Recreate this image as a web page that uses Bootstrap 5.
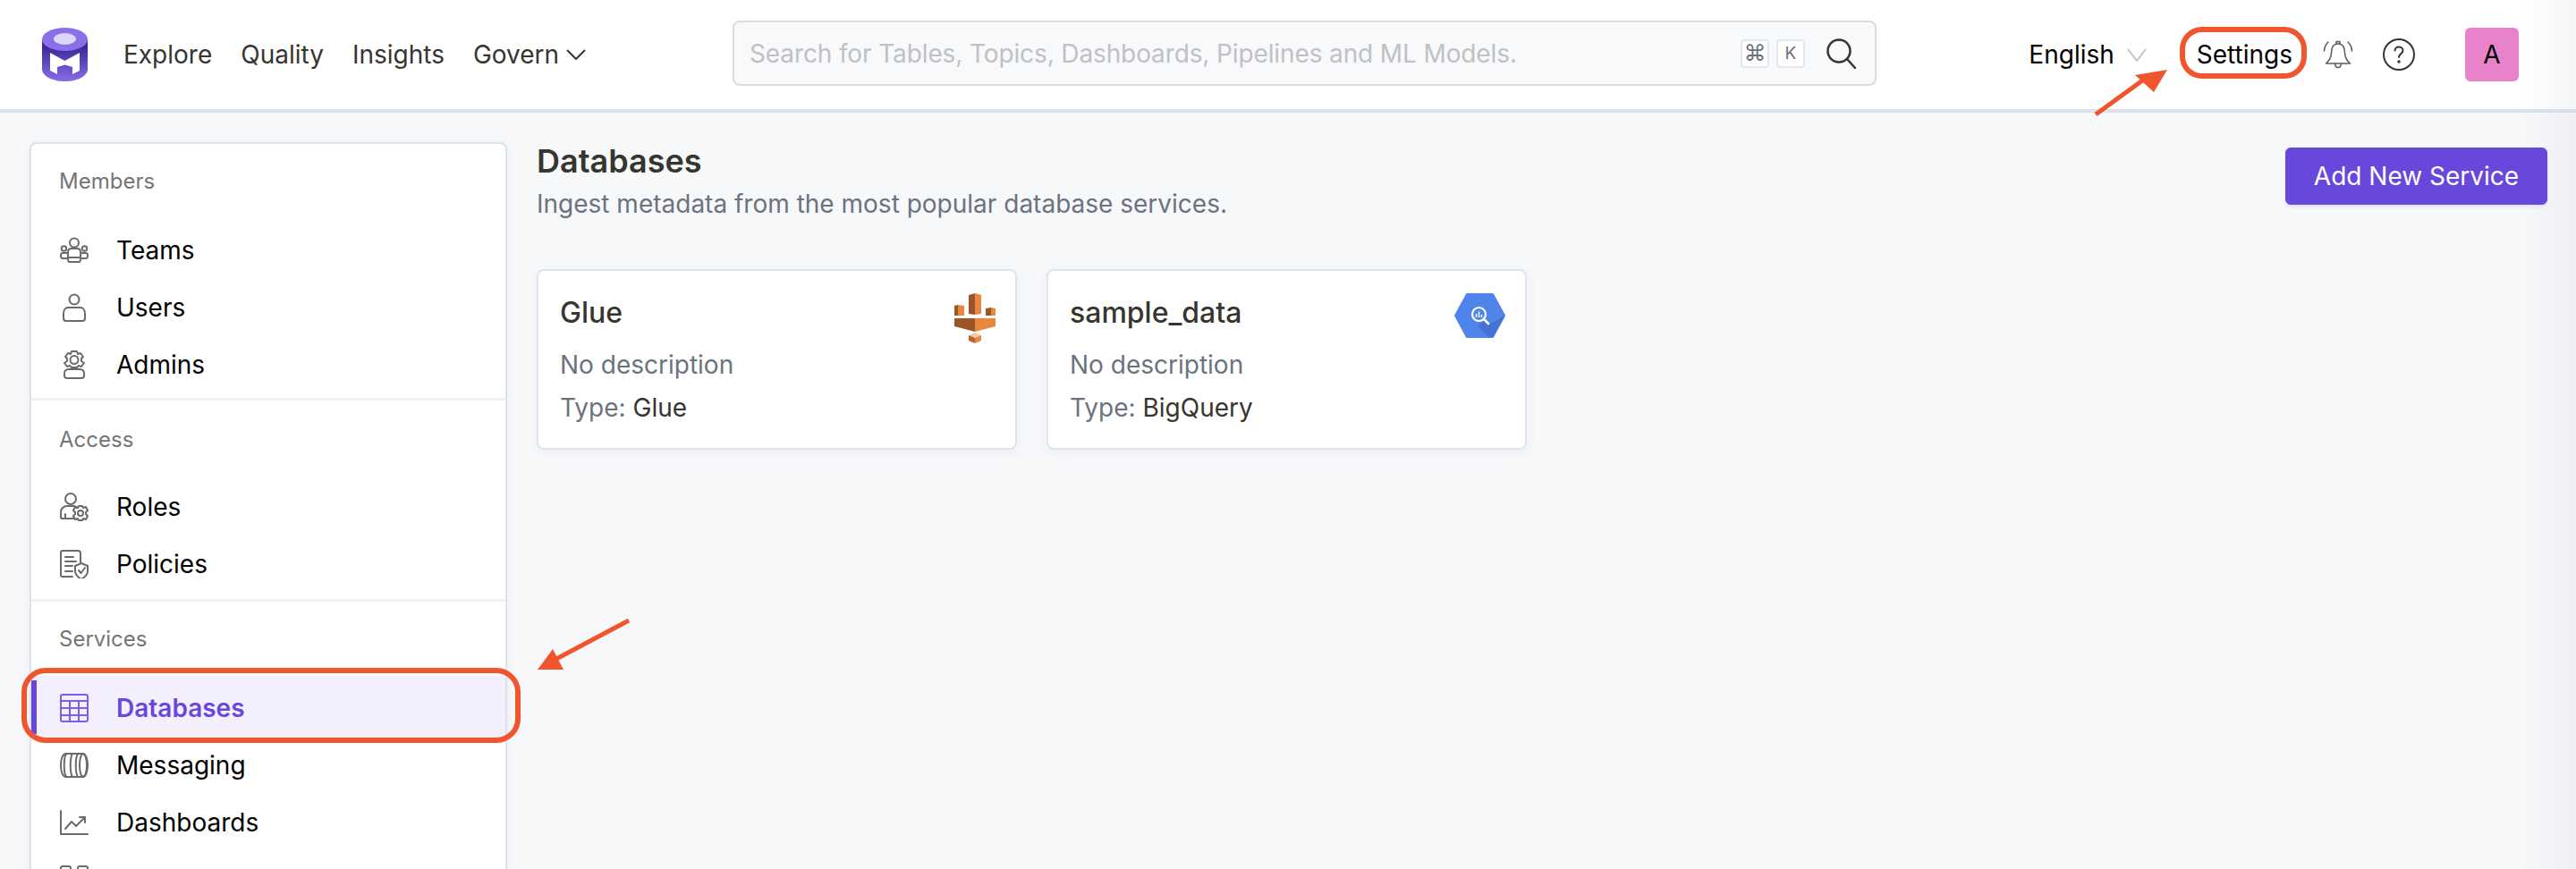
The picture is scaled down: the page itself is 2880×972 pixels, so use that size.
<!DOCTYPE html>
<html lang="en">
<head>
<meta charset="utf-8">
<title>Databases</title>
<link href="https://cdn.jsdelivr.net/npm/bootstrap@5.3.0/dist/css/bootstrap.min.css" rel="stylesheet">
<style>
html,body{height:100%;}
body{width:2880px;height:972px;overflow:hidden;position:relative;background:#f7f8fa;font-family:Inter,"Noto Sans",sans-serif;font-size:28px;color:#37352f;}
.top-bar{height:126px;background:#fff;border-bottom:4px solid #dde3ea;padding:0 64px 0 47px;flex-wrap:nowrap;}
.top-bar .nav-link{color:#37352f;padding:0;font-size:28px;line-height:40px;}
.top-nav{margin-left:40px;gap:32px;}
.search-box{position:absolute;left:819px;top:23px;width:1279px;height:73px;border:2px solid #dcdcdc;border-radius:8px;background:#f8f9fb;padding:0 21px 0 17px;}
.search-input{border:0;background:transparent;font-size:28px;letter-spacing:-.12px;padding:0;flex:1;color:#37352f;outline:none;font-family:inherit;}
.search-input::placeholder{color:#bfc1c5;opacity:1;}
.key-cap{width:32px;height:32px;border:2px solid #e2e7ee;border-radius:4px;background:#fff;color:#6b7280;font-size:19px;line-height:1;}
.key-glyph{font-size:25px;}
.right-tools{margin-left:auto;}
.lang-name{color:#000;margin-right:14px;}
.set-name{color:#000;margin-left:56px;margin-right:34px;}
.help-gap{margin-left:33px;}
.ava-box{width:60px;height:60px;background:#e882cb;color:#000;border-radius:6px;margin-left:56px;}
.side-panel{width:534px;margin:33px 0 0 33px;background:#fff;border:2px solid #dde3ea;border-bottom:0;border-radius:8px 8px 0 0;box-shadow:0 2px 8px rgba(30,50,90,.06);height:813px;overflow:hidden;flex:none;}
.side-group{border-bottom:3px solid #eff1f4;padding:25px 0 7px;}
.side-group:first-child{padding-bottom:5px;}
.side-group:nth-child(2){padding-top:27px;}
.side-group:nth-child(2) .side-title{margin-bottom:26px;}
.side-group:last-child{border-bottom:0;}
.side-title{font-size:24px;line-height:34px;color:#757575;margin:0 0 28px 31px;}
.side-item{height:64px;padding-left:32px;gap:31px;color:#000;position:relative;font-size:28px;flex-wrap:nowrap;}
.side-item svg{flex:none;width:32px;height:32px;fill:none;stroke:#6b6b6b;stroke-width:2;stroke-linecap:round;stroke-linejoin:round;}
.side-item.is-on{background:#f3effd;color:#6847dd;font-weight:600;height:72px;margin:-4px 0;}
.side-item.is-on::before{content:"";position:absolute;left:0;top:5px;bottom:7px;width:6px;background:#6847dd;}
.side-item.is-on svg{stroke:#7b5ee6;}
.page-main{margin:0 0 0 33px;flex:1;padding-right:32px;min-width:0;}
.page-head{height:175px;padding-top:31px;}
.page-name{font-size:36px;font-weight:600;line-height:46px;margin:0 0 2px;color:#37352f;}
.page-sub{font-size:28px;line-height:46px;color:#6b7280;margin:0;}
.add-btn{--bs-btn-bg:#6847dd;--bs-btn-border-color:#6847dd;--bs-btn-hover-bg:#6847dd;--bs-btn-hover-border-color:#6847dd;font-size:28px;height:64px;width:293px;border-radius:6px;margin-top:8px;padding:0;box-shadow:0 3px 3px rgba(30,50,90,.08);}
.svc-list{gap:33px;}
.svc-card{width:537px;height:202px;border:2px solid #dfe4ec;border-radius:8px;box-shadow:0 4px 14px rgba(30,50,90,.05);padding:25px 22px 0 24px;}
.svc-title{font-size:32px;line-height:44px;font-weight:500;margin:0 0 16px;color:#37352f;}
.svc-line{font-size:28px;line-height:40px;color:#6b7280;margin:0 0 8px;}
.svc-line span{color:#37352f;}
.mark-layer{position:absolute;left:0;top:0;width:2880px;height:972px;pointer-events:none;}
.edge-fade{position:absolute;top:0;right:0;width:60px;height:972px;background:linear-gradient(to right,rgba(120,125,135,0),rgba(120,125,135,.07));pointer-events:none;}
</style>
</head>
<body>
<nav class="navbar top-bar d-flex align-items-center">
  <svg width="51" height="60" viewBox="0 0 51 60" aria-label="logo">
    <defs><linearGradient id="cylg" x1="0" y1="0" x2="0" y2="1"><stop offset="0.2" stop-color="#3c2a9c"/><stop offset="1" stop-color="#8a6de8"/></linearGradient></defs>
    <path d="M0 13V46C0 54 11 60 25.500 60S51 54 51 46V13Z" fill="url(#cylg)"/>
    <ellipse cx="25.500" cy="13" rx="25.500" ry="13" fill="#8b6fe8"/>
    <ellipse cx="25.500" cy="12.500" rx="12.500" ry="6.500" fill="#ddd6f6"/>
    <path d="M9 28 25.500 37 42 28V48L34 52V44L25.500 41.500 17 44V52L9 48Z" fill="#fff"/>
  </svg>
  <ul class="nav top-nav align-items-center">
    <li class="nav-item"><a class="nav-link" href="#">Explore</a></li>
    <li class="nav-item"><a class="nav-link" href="#">Quality</a></li>
    <li class="nav-item"><a class="nav-link" href="#">Insights</a></li>
    <li class="nav-item d-flex align-items-center gap-2"><a class="nav-link" href="#">Govern</a>
      <svg width="22" height="12" viewBox="0 0 22 12" fill="none" stroke="#37352f" stroke-width="2"><path d="M1 1 11 11 21 1"/></svg></li>
  </ul>
  <div class="search-box d-flex align-items-center">
    <input class="search-input" type="text" placeholder="Search for Tables, Topics, Dashboards, Pipelines and ML Models.">
    <span class="key-cap key-glyph d-flex align-items-center justify-content-center">⌘</span>
    <span class="key-cap d-flex align-items-center justify-content-center ms-2">K</span>
    <svg class="ms-4" width="33" height="34" viewBox="0 0 33 34" fill="none" stroke="#37352f" stroke-width="2.500" stroke-linecap="round"><circle cx="14" cy="14" r="12.500"/><path d="M23 23 32 33"/></svg>
  </div>
  <div class="right-tools d-flex align-items-center">
    <span class="lang-name">English</span>
    <svg width="22" height="15" viewBox="0 0 22 15" fill="none" stroke="#c4c4c4" stroke-width="2"><path d="M1 1 11 14 21 1"/></svg>
    <span class="set-name">Settings</span>
    <svg width="34" height="34" viewBox="0 0 34 34" fill="none" stroke="#5e5e5e" stroke-width="1.600" stroke-linecap="round" stroke-linejoin="round"><path d="M17 5C11 5 9.500 10 9.500 15 9.500 21 7 24 3.500 27H30.500C27 24 24.500 21 24.500 15 24.500 10 23 5 17 5ZM15 2.500H19V5H15ZM13.500 27C14 33 20 33 20.500 27M6 3C3 6 1.500 9 1.500 13M28 3C31 6 32.500 9 32.500 13"/></svg>
    <svg class="help-gap" width="36" height="36" viewBox="0 0 36 36" fill="none" stroke="#37352f" stroke-width="2" stroke-linecap="round"><circle cx="18" cy="18" r="17"/><path d="M13.500 13.500C13.500 8 22.500 8 22.500 13.500 22.500 17 18 17 18 21"/><circle cx="18" cy="26" r="0.800"/></svg>
    <span class="ava-box d-flex align-items-center justify-content-center">A</span>
  </div>
</nav>
<div class="d-flex">
  <aside class="side-panel">
    <div class="side-group">
      <p class="side-title">Members</p>
      <div class="side-item d-flex align-items-center"><svg viewBox="0 0 32 32"><circle cx="16" cy="7.500" r="5"/><path d="M9 24V18C9 15 11 14 13 14H19C21 14 23 15 23 18V24M9 26C9 28 10 29 11 29H21C22 29 23 28 23 26V24H9Z"/><circle cx="4.500" cy="14" r="2.800"/><circle cx="27.500" cy="14" r="2.800"/><path d="M9 19H3C1.500 19 1 20 1 22 1 24 2 25 3 25H9M23 19H29C30.500 19 31 20 31 22 31 24 30 25 29 25H23"/></svg><span>Teams</span></div>
      <div class="side-item d-flex align-items-center"><svg viewBox="0 0 32 32"><circle cx="16" cy="7" r="5.500"/><path d="M9 16H23C26 16 28 19 28 23V28C28 30 27 31 25 31H7C5 31 4 30 4 28V23C4 19 6 16 9 16Z"/></svg><span>Users</span></div>
      <div class="side-item d-flex align-items-center"><svg viewBox="0 0 32 32"><path d="M13 1H19L20 4 23 3 26 7 24 9V12L27 14 24 18 21 17 19 19H13L11 17 8 18 5 14 8 12V9L6 7 9 3 12 4Z"/><circle cx="16" cy="10.500" r="4.500"/><path d="M10 21H22C25 21 27 23 27 26V28C27 30 26 31 24 31H8C6 31 5 30 5 28V26C5 23 7 21 10 21Z"/></svg><span>Admins</span></div>
    </div>
    <div class="side-group">
      <p class="side-title">Access</p>
      <div class="side-item d-flex align-items-center"><svg viewBox="0 0 32 32" stroke-width="1.800"><circle cx="12" cy="7" r="6"/><path d="M15 29H2C1 29 1 28 1 27V22C1 18 4 15 8 15H16C17 15 18 16 19 17M6 24V29"/><circle cx="23" cy="23" r="3"/><path d="M21 15H25L26 17 29 16 31 20 29 22V24L31 26 29 30 26 29 25 31H21L20 29 17 30 15 26 17 24V22L15 20 17 16 20 17Z"/></svg><span>Roles</span></div>
      <div class="side-item d-flex align-items-center"><svg viewBox="0 0 32 32" stroke-width="1.800"><path d="M14 30H3C1.500 30 1 29 1 28V3C1 2 2 1 3 1H20C22 1 23 2 23 4V14M6 8H15M6 13H18M6 18H14M6 24H14"/><path d="M24 15 31 18V24C31 28 27 31 24 33 21 31 17 28 17 24V18Z"/><path d="M21 23 23.500 26 28 20"/></svg><span>Policies</span></div>
    </div>
    <div class="side-group">
      <p class="side-title">Services</p>
      <div class="side-item is-on d-flex align-items-center"><svg viewBox="0 0 32 32"><rect x="1" y="1" width="30" height="30" rx="2"/><path d="M1 8H31M1 16H31M1 24H31M11 8V31M21 8V31"/></svg><span>Databases</span></div>
      <div class="side-item d-flex align-items-center"><svg viewBox="0 0 32 32"><path d="M7 3H25C29 3 31 9 31 16S29 29 25 29H7C3 29 1 23 1 16S3 3 7 3Z"/><path d="M7 3C4 8 4 24 7 29M14 3C11 8 11 24 14 29M20 3C17 8 17 24 20 29"/><ellipse cx="26" cy="16" rx="4" ry="13"/></svg><span>Messaging</span></div>
      <div class="side-item d-flex align-items-center"><svg viewBox="0 0 32 32"><path d="M1 3V29H31M6 23 13 15 18 20 28 10M22 10H28V16"/></svg><span>Dashboards</span></div>
      <div class="side-item d-flex align-items-center"><svg viewBox="0 0 32 32"><rect x="1" y="1" width="11" height="11" rx="2"/><rect x="20" y="1" width="11" height="11" rx="2"/></svg></div>
    </div>
  </aside>
  <main class="page-main">
    <div class="page-head d-flex justify-content-between align-items-start">
      <div>
        <h1 class="page-name">Databases</h1>
        <p class="page-sub">Ingest metadata from the most popular database services.</p>
      </div>
      <button class="btn btn-primary add-btn" type="button">Add New Service</button>
    </div>
    <div class="svc-list d-flex">
      <div class="card svc-card">
        <div class="d-flex justify-content-between align-items-start">
          <h2 class="svc-title">Glue</h2>
          <svg width="46" height="56" viewBox="0 0 46 56">
            <path d="M23 0 16 2V23L23 24Z" fill="#9d5528"/><path d="M23 0 30 2V23L23 24Z" fill="#e8873f"/>
            <path d="M4 13 0 14V25H4Z" fill="#9d5528"/><path d="M4 13 11 14V25H4Z" fill="#e8873f"/>
            <path d="M41 16 35 17V25H41Z" fill="#9d5528"/><path d="M41 16 46 17V25H41Z" fill="#e8873f"/>
            <path d="M0 28H23V43L0 37Z" fill="#9d5528"/><path d="M46 28H23V43L46 37Z" fill="#e8873f"/>
            <path d="M16 47 23 44 30 47 23 50Z" fill="#f6c9a4"/><path d="M16 47V53L23 56V50Z" fill="#b5622d"/><path d="M30 47V53L23 56V50Z" fill="#e8873f"/>
          </svg>
        </div>
        <p class="svc-line">No description</p>
        <p class="svc-line">Type: <span>Glue</span></p>
      </div>
      <div class="card svc-card">
        <div class="d-flex justify-content-between align-items-start">
          <h2 class="svc-title">sample_data</h2>
          <svg width="57" height="50" viewBox="0 0 57 50">
            <path d="M1 25 14 1H43L56 25 43 49H14Z" fill="#4f84eb" stroke="#4f84eb" stroke-width="2" stroke-linejoin="round"/>
            <path d="M35 30 39 35 56 25 43 49H38L26 36Z" fill="#4872d2"/>
            <circle cx="27.500" cy="23.500" r="7.500" fill="none" stroke="#fff" stroke-width="2.200"/>
            <path d="M33 29 38 34" stroke="#fff" stroke-width="2.600" stroke-linecap="round"/>
            <path d="M24.500 23V27M27.500 20.500V27M30.500 24V27" stroke="#fff" stroke-width="1.600"/>
          </svg>
        </div>
        <p class="svc-line">No description</p>
        <p class="svc-line">Type: <span>BigQuery</span></p>
      </div>
    </div>
  </main>
</div>
<div class="edge-fade"></div>
<svg class="mark-layer" viewBox="0 0 2880 972" fill="none">
  <rect x="2440" y="33" width="136" height="52" rx="22" stroke="#f0552e" stroke-width="6"/>
  <path d="M2343 128 2398 88" stroke="#f0552e" stroke-width="5"/>
  <path d="M2423 78 2408 103 2387 84Z" fill="#f0552e"/>
  <rect x="27" y="750" width="552" height="78" rx="24" stroke="#f0552e" stroke-width="6"/>
  <path d="M703 694 622 737" stroke="#f0552e" stroke-width="5"/>
  <path d="M601 749 630 749 618 726Z" fill="#f0552e"/>
</svg>
<script src="https://cdn.jsdelivr.net/npm/bootstrap@5.3.0/dist/js/bootstrap.bundle.min.js"></script>
</body>
</html>
